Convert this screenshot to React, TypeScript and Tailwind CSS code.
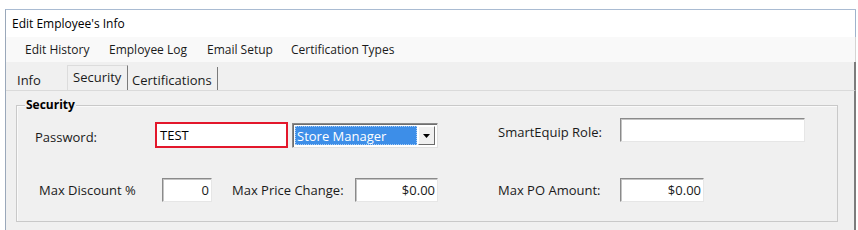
import React from 'react';

// Classic WinForms "Edit Employee's Info" dialog, Security tab.
const MENU = [
  { label: 'Edit History', w: 'w-[84px]' },
  { label: 'Employee Log', w: 'w-[98px]' },
  { label: 'Email Setup', w: 'w-[84px]' },
  { label: 'Certification Types', w: 'w-auto' },
];

function SunkenInput({ value, width, align = 'right' }: { value: string; width: string; align?: 'left' | 'right' }) {
  return (
    <div
      className={`${width} h-[24px] flex items-center bg-white border border-t-[#8a8a8a] border-l-[#8a8a8a] border-b-[#e6e6e6] border-r-[#e6e6e6] shadow-[inset_1px_1px_0_#c4c4c4] ${
        align === 'right' ? 'justify-end pr-[2px]' : 'justify-start pl-[3px]'
      }`}
    >
      {value}
    </div>
  );
}

export default function App() {
  return (
    <div className="w-[858px] h-[230px] bg-white pt-[9px] pl-[5px] overflow-hidden font-['Open_Sans',sans-serif] text-[12px] leading-[16px] text-[#1a1a1a]">
      <div className="w-[851px] h-[221px] flex flex-col border-l border-t border-l-[#9aa8ba] border-t-[#a9bbd2]">
        {/* Title */}
        <div className="h-[27px] flex items-center pl-[6px] bg-white border-r border-r-[#9fb3cc] text-[12px] text-black">
          Edit Employee's Info
        </div>

        {/* Menu strip */}
        <div className="h-[25px] flex items-center pl-[19px] bg-[#f9f9f9] border-r border-r-[#d4d4d4]">
          {MENU.map((m) => (
            <span key={m.label} className={m.w}>
              {m.label}
            </span>
          ))}
        </div>

        {/* Tabs */}
        <div className="h-[29px] flex items-end bg-[#f0f0f0] border-b border-b-[#dadada] border-r-2 border-r-[#7c7c7c] text-[13px]">
          <div className="w-[61px] h-[22px] pl-[11px] flex items-center pt-[2px]">Info</div>
          <div className="w-[61px] h-[25px] flex items-center pl-[5px] border-t border-l border-r border-t-[#dcdcdc] border-l-[#dcdcdc] border-r-[#7a7a7a] pb-[2px]">
            Security
          </div>
          <div className="w-[90px] h-[23px] flex items-center pl-[4px] pt-[2px] border-r border-r-[#7a7a7a]">
            Certifications
          </div>
        </div>

        {/* Tab page */}
        <div className="flex-1 bg-[#f0f0f0] border-r-2 border-r-[#7c7c7c] pt-[14px] pl-[10px] text-[13px]">
          <div className="relative w-[822px] border border-[#c9c9c9] shadow-[inset_1px_1px_0_#fafafa] pb-[19px]">
            <span className="absolute -top-[9px] left-[8px] px-[1px] bg-[#f0f0f0] font-bold text-[12px] text-black">
              Security
            </span>

            {/* Row 1 */}
            <div className="flex items-start mt-[12px] h-[30px]">
              <div className="ml-[18px] w-[120px] mt-[11px]">Password:</div>
              <div className="w-[133px] h-[26px] mt-[4px] flex items-center pl-[3px] bg-white border-2 border-[#e3172b] text-black">
                TEST
              </div>
              <div className="ml-[4px] mt-[5px] w-[146px] h-[25px] flex items-stretch p-[2px] bg-white border border-t-[#8a8a8a] border-l-[#8a8a8a] border-b-[#e0e0e0] border-r-[#e0e0e0] shadow-[inset_1px_1px_0_#6e6e6e]">
                <div className="flex-1 flex items-center pl-[1px] bg-[#3d8ee8] text-white text-[13px] border border-dotted border-[#a9cdf5]">
                  Store Manager
                </div>
                <div className="w-[17px] ml-[1px] flex items-center justify-center bg-[#f0f0f0] border border-t-white border-l-white border-b-[#6b6b6b] border-r-[#6b6b6b]">
                  <svg width="7" height="4" viewBox="0 0 7 4">
                    <path d="M0 0h7L3.5 4z" fill="#000" />
                  </svg>
                </div>
              </div>
              <div className="ml-[60px] w-[122px] mt-[6px]">SmartEquip Role:</div>
              <SunkenInput value="" width="w-[185px]" />
            </div>

            {/* Row 2 */}
            <div className="flex items-center mt-[30px] h-[24px]">
              <div className="ml-[22px] w-[123px]">Max Discount %</div>
              <SunkenInput value="0" width="w-[50px]" />
              <div className="ml-[20px] w-[123px]">Max Price Change:</div>
              <SunkenInput value="$0.00" width="w-[83px]" />
              <div className="ml-[60px] w-[122px]">Max PO Amount:</div>
              <SunkenInput value="$0.00" width="w-[84px]" />
            </div>
          </div>
        </div>
      </div>
    </div>
  );
}
